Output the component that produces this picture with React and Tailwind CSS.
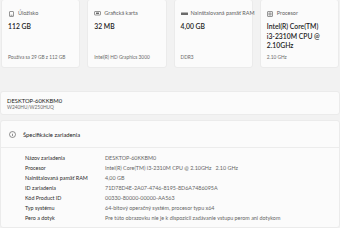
import React from "react";

const font = { fontFamily: 'Lato, "Noto Sans", sans-serif' };

function StorageIcon() {
  return (
    <svg width="5" height="6" viewBox="0 0 10 12" fill="none" stroke="#6b6b6b" strokeWidth="1.4">
      <rect x="1" y="1" width="8" height="10" rx="1" />
      <line x1="3" y1="8.5" x2="7" y2="8.5" />
    </svg>
  );
}
function GpuIcon() {
  return (
    <svg width="7" height="5" viewBox="0 0 14 10" fill="none" stroke="#6b6b6b" strokeWidth="1.4">
      <rect x="1" y="1" width="12" height="7" rx="1" />
      <rect x="4" y="3" width="6" height="3" fill="#6b6b6b" stroke="none" />
    </svg>
  );
}
function RamIcon() {
  return (
    <svg width="7" height="4" viewBox="0 0 14 8" fill="#6b6b6b">
      <rect x="0" y="1" width="14" height="5" rx="0.6" />
    </svg>
  );
}
function CpuIcon() {
  return (
    <svg width="6" height="6" viewBox="0 0 12 12" fill="none" stroke="#6b6b6b" strokeWidth="1.4">
      <rect x="1" y="1" width="10" height="10" rx="1" />
      <rect x="4" y="4" width="4" height="4" />
    </svg>
  );
}

function Card({ icon, label, value, caption }) {
  return (
    <div className="flex h-[69px] flex-col rounded-[3px] border border-[#ebebeb] bg-[#fbfbfb] px-[6px] pt-[10px] pb-[7px]">
      <div className="flex items-center gap-[3px] whitespace-nowrap text-[5.5px] leading-[7px] text-[#5f5f5f]">
        <span className="flex w-[7px] justify-center">{icon}</span>
        <span>{label}</span>
      </div>
      <div className="mt-[5px] flex flex-col whitespace-nowrap text-[6.8px] font-semibold leading-[9.5px] text-[#1b1b1b]">
        {value.map((l) => (
          <span key={l}>{l}</span>
        ))}
      </div>
      <div className="mt-auto text-[4.8px] leading-[6px] text-[#6a6a6a]">{caption}</div>
    </div>
  );
}

const rows = [
  ["Názov zariadenia", "DESKTOP-60KKBM0"],
  ["Procesor", "Intel(R) Core(TM) i3-2310M CPU @ 2.10GHz   2.10 GHz"],
  ["Nainštalovaná pamäť RAM", "4,00 GB"],
  ["ID zariadenia", "71D78D4E-2A07-4746-8195-8D6A7486095A"],
  ["Kód Product ID", "00330-80000-00000-AA563"],
  ["Typ systému", "64-bitový operačný systém, procesor typu x64"],
  ["Pero a dotyk", "Pre túto obrazovku nie je k dispozícii zadávanie vstupu perom ani dotykom"],
];

export default function App() {
  return (
    <div className="h-[228px] w-[340px] overflow-hidden bg-[#f2f2f2]" style={font}>
      <div className="grid grid-cols-4 gap-[7px] px-[1px] -mt-[1px]">
        <Card icon={<StorageIcon />} label="Úložisko" value={["112 GB"]} caption="Používa sa 29 GB z 112 GB" />
        <Card icon={<GpuIcon />} label="Grafická karta" value={["32 MB"]} caption="Intel(R) HD Graphics 3000" />
        <Card icon={<RamIcon />} label="Nainštalovaná pamäť RAM" value={["4,00 GB"]} caption="DDR3" />
        <Card
          icon={<CpuIcon />}
          label="Procesor"
          value={["Intel(R) Core(TM)", "i3-2310M CPU @", "2.10GHz"]}
          caption="2.10 GHz"
        />
      </div>

      <div className="mt-[23px] flex h-[24px] flex-col justify-center rounded-[3px] border border-[#ebebeb] bg-[#fbfbfb] px-[6px]">
        <div className="text-[5.8px] leading-[7px] text-[#1b1b1b]">DESKTOP-60KKBM0</div>
        <div className="text-[4.8px] leading-[6px] text-[#6a6a6a]">W240HU/W250HUQ</div>
      </div>

      <div className="mt-[5px] rounded-[3px] border border-[#ebebeb] bg-[#fbfbfb]">
        <div className="flex h-[26px] items-center gap-[7px] px-[8px]">
          <svg width="7" height="7" viewBox="0 0 14 14" fill="none" stroke="#3a3a3a" strokeWidth="1.1">
            <circle cx="7" cy="7" r="6" />
            <line x1="7" y1="6" x2="7" y2="10.2" />
            <circle cx="7" cy="4" r="0.6" fill="#3a3a3a" stroke="none" />
          </svg>
          <span className="text-[5.8px] leading-[7px] text-[#1b1b1b]">Špecifikácie zariadenia</span>
        </div>
        <div className="border-t border-[#ececec] pt-[5px] pb-[4px]">
          {rows.map(([k, v]) => (
            <div key={k} className="flex h-[10px] items-center text-[5.4px] leading-[7px]">
              <span className="w-[104px] shrink-0 pl-[24px] text-[#2b2b2b]">{k}</span>
              <span className="whitespace-pre text-[#666666]">{v}</span>
            </div>
          ))}
        </div>
      </div>
    </div>
  );
}
